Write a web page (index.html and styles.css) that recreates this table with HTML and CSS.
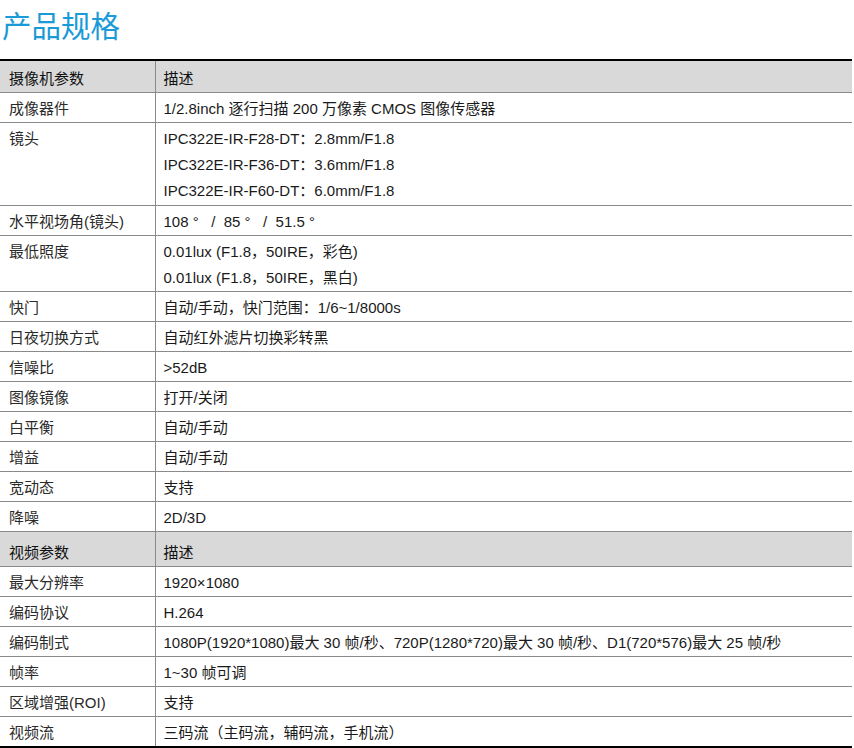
FILE: index.html
```html
<!DOCTYPE html>
<html lang="zh-CN">
<head>
<meta charset="utf-8">
<title>产品规格</title>
<link rel="stylesheet" href="styles.css">
</head>
<body>
<h1 class="title">产品规格</h1>
<table class="spec">
  <colgroup><col class="c1"><col class="c2"></colgroup>
  <tbody>
    <tr class="head first"><td>摄像机参数</td><td>描述</td></tr>
    <tr><td>成像器件</td><td>1/2.8inch 逐行扫描 200 万像素 CMOS 图像传感器</td></tr>
    <tr class="l3"><td>镜头</td><td><div>IPC322E-IR-F28-DT：2.8mm/F1.8</div><div>IPC322E-IR-F36-DT：3.6mm/F1.8</div><div>IPC322E-IR-F60-DT：6.0mm/F1.8</div></td></tr>
    <tr><td>水平视场角(镜头)</td><td>108 °&nbsp;&nbsp;&nbsp;/&nbsp;&nbsp;85 °&nbsp;&nbsp;&nbsp;/&nbsp;&nbsp;51.5 °</td></tr>
    <tr class="l2"><td>最低照度</td><td><div>0.01lux (F1.8，50IRE，彩色)</div><div>0.01lux (F1.8，50IRE，黑白)</div></td></tr>
    <tr><td>快门</td><td>自动/手动，快门范围：1/6~1/8000s</td></tr>
    <tr><td>日夜切换方式</td><td>自动红外滤片切换彩转黑</td></tr>
    <tr><td>信噪比</td><td>&gt;52dB</td></tr>
    <tr><td>图像镜像</td><td>打开/关闭</td></tr>
    <tr><td>白平衡</td><td>自动/手动</td></tr>
    <tr><td>增益</td><td>自动/手动</td></tr>
    <tr><td>宽动态</td><td>支持</td></tr>
    <tr><td>降噪</td><td>2D/3D</td></tr>
    <tr class="head second"><td>视频参数</td><td>描述</td></tr>
    <tr><td>最大分辨率</td><td>1920×1080</td></tr>
    <tr><td>编码协议</td><td>H.264</td></tr>
    <tr><td>编码制式</td><td>1080P(1920*1080)最大 30 帧/秒、720P(1280*720)最大 30 帧/秒、D1(720*576)最大 25 帧/秒</td></tr>
    <tr><td>帧率</td><td>1~30 帧可调</td></tr>
    <tr><td>区域增强(ROI)</td><td>支持</td></tr>
    <tr class="last"><td>视频流</td><td>三码流（主码流，辅码流，手机流）</td></tr>
  </tbody>
</table>
</body>
</html>
```
FILE: styles.css
```css
html, body {
  margin: 0;
  padding: 0;
  background: #ffffff;
}
body {
  font-family: "Liberation Sans", "Noto Sans CJK SC", sans-serif;
  font-size: 15px;
  color: #1a1a1a;
}
.title {
  margin: 0;
  padding: 5px 0 0 2px;
  height: 54px;
  box-sizing: border-box;
  font-family: "Noto Sans CJK SC", sans-serif;
  font-weight: 400;
  font-size: 29.5px;
  line-height: 38px;
  color: #1a9bd7;
}
.spec {
  width: 852px;
  border-collapse: collapse;
  border-top: 2px solid #000;
  border-bottom: 3px solid #000;
  margin-top: 5px;
}
.c1 { width: 155px; }
.spec td {
  padding: 3px 8px 0 9px;
  line-height: 26px;
  height: 26px;
  vertical-align: top;
  border-bottom: 1px solid #8a8a8a;
  border-left: 1px solid #8a8a8a;
  box-sizing: content-box;
  white-space: nowrap;
}
.spec td:first-child {
  border-left: none;
  padding-left: 9px;
  color: #2a2a2a;
}
.spec td:last-child { padding-left: 8px; }
.spec tr.l3 td { padding-bottom: 1px; }
.spec tr.l2 td { padding-bottom: 0; }
.spec tr.head td {
  background: #d9d9d9;
  color: #111;
}
.spec tr.first td {
  padding-top: 5px;
  height: 21px;
}
.spec tr.second td {
  padding-top: 8px;
  height: 23px;
}
.spec tr.last td { border-bottom: none; }
```
